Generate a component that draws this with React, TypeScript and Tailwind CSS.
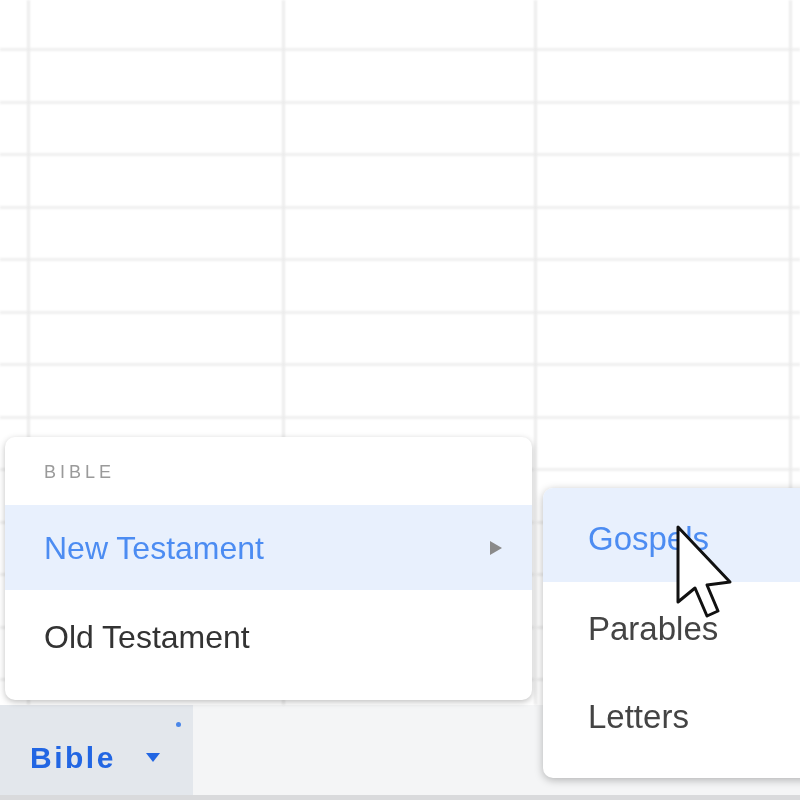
import React from "react";

const rows = Array.from({ length: 14 });

function Cursor() {
  return (
    <svg
      className="absolute left-[672px] top-[522px]"
      width="66"
      height="104"
      viewBox="0 0 66 104"
    >
      <path
        d="M6 5 L6 80 L23 66 L35 94 L46 89 L35 63 L58 60 Z"
        fill="#ffffff"
        stroke="#111111"
        strokeWidth="3"
        strokeLinejoin="round"
      />
    </svg>
  );
}

function Col({ className }: { className: string }) {
  return (
    <div className={className}>
      {rows.map((_, i) => (
        <div key={i} className="h-[52.5px] border-b-[3px] border-[#efefef] first:h-[51px]" />
      ))}
    </div>
  );
}

export default function App() {
  return (
    <div
      className="relative w-[800px] h-[800px] overflow-hidden bg-white flex flex-col"
      style={{ fontFamily: "'Liberation Sans', Arial, sans-serif" }}
    >
      {/* Spreadsheet grid */}
      <div className="flex-1 overflow-hidden flex blur-[0.8px]">
        <Col className="w-[30px] shrink-0 border-r-[3px] border-[#ececec]" />
        <Col className="w-[255px] shrink-0 border-r-[3px] border-[#ececec]" />
        <Col className="w-[252px] shrink-0 border-r-[3px] border-[#ececec]" />
        <Col className="w-[255px] shrink-0 border-r-[3px] border-[#ececec]" />
        <Col className="flex-1" />
      </div>

      {/* Bottom sheet tab bar */}
      <div className="h-[95px] shrink-0 flex flex-col bg-[#f3f4f6]">
        <div className="flex-1 flex">
          <div className="relative w-[193px] bg-[#e3e7ec] flex items-center pl-[30px] pt-[14px] blur-[0.6px]">
            <span className="text-[30px] font-bold text-[#2266e3] tracking-[2.5px]">Bible</span>
            <svg className="ml-[30px]" width="14" height="9" viewBox="0 0 14 9">
              <path d="M0 0 L14 0 L7 9 Z" fill="#2266e3" />
            </svg>
            <span className="absolute left-[176px] top-[17px] w-[5px] h-[5px] rounded-full bg-[#4a86e8]" />
          </div>
          <div className="flex-1 bg-[#f4f5f6]" />
        </div>
        <div className="h-[5px] bg-[#d9dadc]" />
      </div>

      {/* Main menu */}
      <div className="absolute left-[5px] top-[437px] w-[527px] h-[263px] bg-white rounded-[10px] shadow-[0_2px_6px_rgba(0,0,0,0.25)] flex flex-col overflow-hidden blur-[0.6px]">
        <div className="h-[68px] flex items-center pl-[39px] pt-[2px]">
          <span className="text-[18px] tracking-[4px] text-[#9a9a9a]">BIBLE</span>
        </div>
        <div className="h-[85px] flex items-center justify-between pl-[39px] pr-[30px] bg-[#e8f0fd]">
          <span className="text-[32px] text-[#4c8cf2]">New Testament</span>
          <svg width="12" height="14" viewBox="0 0 12 14">
            <path d="M0 0 L12 7 L0 14 Z" fill="#8a8a8a" />
          </svg>
        </div>
        <div className="h-[94px] flex items-center pl-[39px]">
          <span className="text-[32px] text-[#333333]">Old Testament</span>
        </div>
      </div>

      {/* Submenu */}
      <div className="absolute left-[543px] top-[488px] w-[300px] h-[290px] bg-white rounded-[10px] shadow-[0_2px_8px_rgba(0,0,0,0.28)] flex flex-col overflow-hidden blur-[0.6px]">
        <div className="h-[94px] flex items-center pl-[45px] pt-[8px] bg-[#e8f0fd]">
          <span className="text-[33px] text-[#4c8cf2]">Gospels</span>
        </div>
        <div className="h-[92px] flex items-center pl-[45px] pt-[2px]">
          <span className="text-[33px] text-[#444444]">Parables</span>
        </div>
        <div className="h-[84px] flex items-center pl-[45px] pt-[2px]">
          <span className="text-[33px] text-[#444444]">Letters</span>
        </div>
      </div>

      <Cursor />
    </div>
  );
}
